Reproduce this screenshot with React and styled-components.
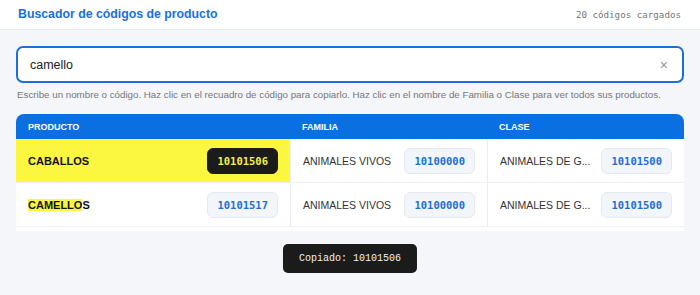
import React from "react";
import styled, { createGlobalStyle } from "styled-components";

const GlobalStyle = createGlobalStyle`
  html, body {
    margin: 0;
    padding: 0;
    background: #f4f6fa;
    font-family: "Liberation Sans", Arial, sans-serif;
  }
`;

const TopBar = styled.header`
  height: 29px;
  display: flex;
  align-items: center;
  justify-content: space-between;
  padding: 0 19px 0 18px;
  background: #ffffff;
  border-bottom: 1px solid #e8ecf2;
`;

const Title = styled.h1`
  margin: 0 0 1px 0;
  font-size: 12.3px;
  font-weight: 700;
  color: #1b6fd8;
`;

const Count = styled.span`
  font-family: "DejaVu Sans Mono", "Liberation Mono", monospace;
  font-size: 9.2px;
  color: #777;
`;

const Main = styled.main`
  padding: 16px 16px 0 16px;
`;

const SearchBox = styled.div`
  height: 33px;
  display: flex;
  align-items: center;
  justify-content: space-between;
  padding: 0 14px 0 12px;
  background: #fff;
  border: 2px solid #1a6fdc;
  border-radius: 7px;
`;

const SearchText = styled.span`
  font-size: 12.5px;
  color: #222;
`;

const Clear = styled.span`
  font-size: 14px;
  color: #9a9a9a;
`;

const Hint = styled.p`
  margin: 6px 0 0 1px;
  font-size: 9.75px;
  color: #777;
  line-height: 12px;
  white-space: nowrap;
`;

const Table = styled.div`
  margin-top: 13px;
  background: #fff;
  border-radius: 8px 8px 0 0;
  overflow: hidden;
  height: 117px;
`;

const Row = styled.div`
  display: grid;
  grid-template-columns: 274px 197px 1fr;
  height: ${(p) => (p.$head ? "25px" : "43px")};
  background: ${(p) => (p.$head ? "#0a6fe0" : "#fff")};
  border-bottom: ${(p) => (p.$head ? "none" : "1px solid #edf0f5")};
`;

const HeadCell = styled.div`
  display: flex;
  align-items: center;
  padding: 0 12px;
  font-size: 9px;
  font-weight: 700;
  color: #fff;
`;

const Cell = styled.div`
  display: flex;
  align-items: center;
  justify-content: space-between;
  gap: 8px;
  padding: 0 12px;
  min-width: 0;
  background: ${(p) => (p.$hit ? "#fbf63f" : "transparent")};
  border-left: ${(p) => (p.$first ? "none" : "1px solid #e9edf3")};
`;

const Name = styled.span`
  font-size: 11px;
  font-weight: 700;
  color: #111;
`;

const Mark = styled.mark`
  background: #fbf63f;
  color: inherit;
  padding: 0;
`;

const Label = styled.span`
  font-size: 10.5px;
  color: #333;
  white-space: nowrap;
`;

const Code = styled.span`
  flex: none;
  height: 24px;
  display: flex;
  align-items: center;
  padding: 0 9px;
  border-radius: 6px;
  font-family: "DejaVu Sans Mono", "Liberation Mono", monospace;
  font-size: 10.5px;
  font-weight: 700;
  background: ${(p) => (p.$active ? "#1b1b1b" : "#f2f5f9")};
  color: ${(p) => (p.$active ? "#f7ee4a" : "#1c6fd4")};
  border: 1px solid ${(p) => (p.$active ? "#1b1b1b" : "#e5e9ef")};
`;

const Toast = styled.div`
  position: fixed;
  left: 50%;
  bottom: 22px;
  transform: translateX(-50%);
  padding: 9px 16px;
  background: #1b1b1b;
  border-radius: 5px;
  font-family: "Liberation Mono", monospace;
  font-size: 10px;
  color: #f2f2f2;
`;

const rows = [
  { name: "CABALLOS", code: "10101506", active: true },
  { name: "CAMELLOS", match: "CAMELLO", code: "10101517" },
];

export default function App() {
  return (
    <>
      <GlobalStyle />
      <TopBar>
        <Title>Buscador de códigos de producto</Title>
        <Count>20 códigos cargados</Count>
      </TopBar>
      <Main>
        <SearchBox>
          <SearchText>camello</SearchText>
          <Clear>×</Clear>
        </SearchBox>
        <Hint>
          Escribe un nombre o código. Haz clic en el recuadro de código para copiarlo. Haz clic en
          el nombre de Familia o Clase para ver todos sus productos.
        </Hint>
        <Table>
          <Row $head>
            <HeadCell>PRODUCTO</HeadCell>
            <HeadCell>FAMILIA</HeadCell>
            <HeadCell>CLASE</HeadCell>
          </Row>
          {rows.map((r) => (
            <Row key={r.code}>
              <Cell $first $hit={r.active}>
                <Name>
                  {r.match ? (
                    <>
                      <Mark>{r.match}</Mark>
                      {r.name.slice(r.match.length)}
                    </>
                  ) : (
                    r.name
                  )}
                </Name>
                <Code $active={r.active}>{r.code}</Code>
              </Cell>
              <Cell>
                <Label>ANIMALES VIVOS</Label>
                <Code>10100000</Code>
              </Cell>
              <Cell>
                <Label>ANIMALES DE G...</Label>
                <Code>10101500</Code>
              </Cell>
            </Row>
          ))}
        </Table>
      </Main>
      <Toast>Copiado: 10101506</Toast>
    </>
  );
}
